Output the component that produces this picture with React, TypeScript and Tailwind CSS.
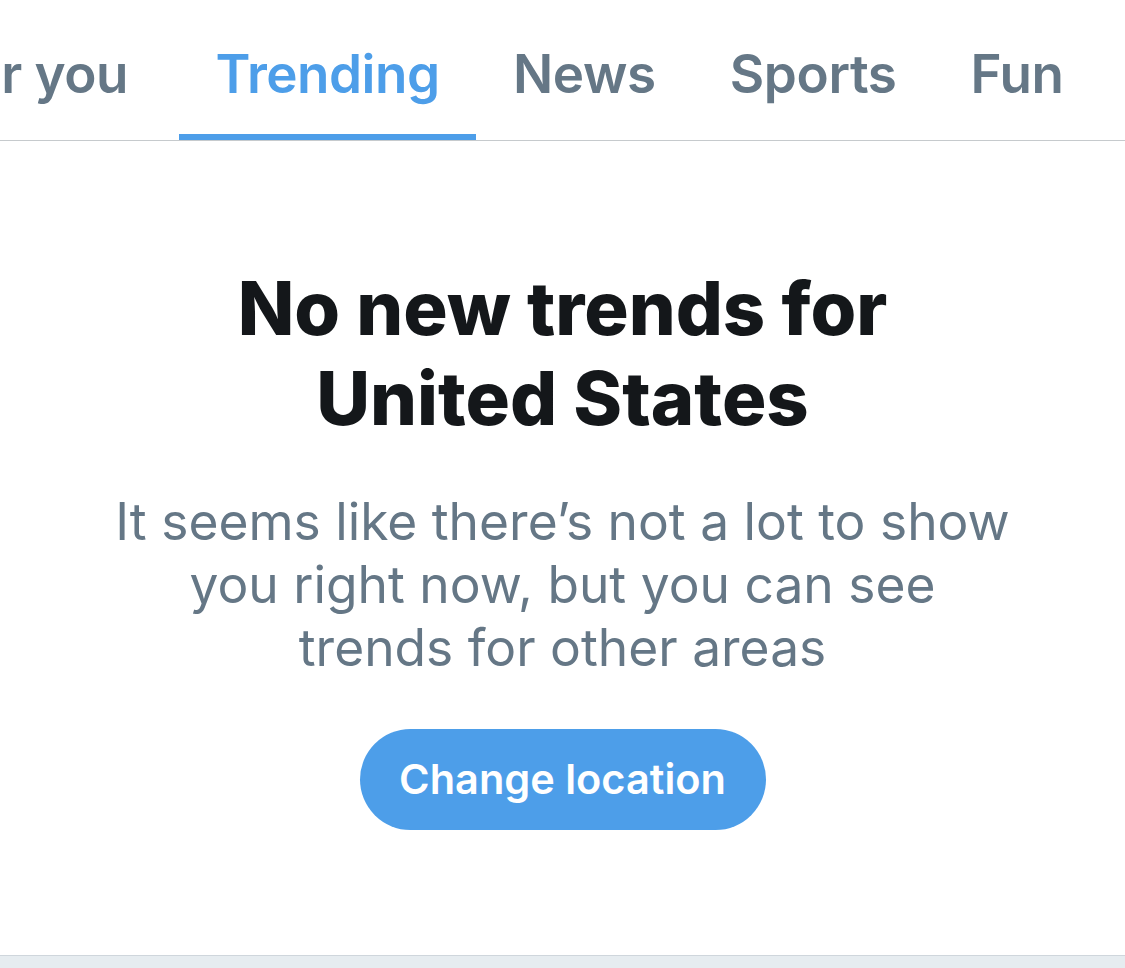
import React from "react";

const tabs = ["News", "Sports", "Fun"];

const App: React.FC = () => {
  return (
    <div className="w-[1125px] h-[968px] overflow-hidden bg-white flex flex-col font-['Inter',sans-serif]">
      {/* tab bar */}
      <div className="flex h-[141px] shrink-0 border-b border-[#c6cacd]">
        <div className="w-[179px] shrink-0 flex justify-end pr-[51px] pt-[47px]">
          <span className="whitespace-nowrap text-[53px] leading-[55px] font-semibold tracking-[-0.5px] text-[#657786]">
            For you
          </span>
        </div>
        <div className="w-[297px] shrink-0 flex flex-col items-center justify-between">
          <span className="pt-[47px] text-[53px] leading-[55px] font-semibold tracking-[-0.5px] text-[#4d9ee9]">
            Trending
          </span>
          <div className="w-full h-[6px] bg-[#4d9ee9]" />
        </div>
        {tabs.map((t) => (
          <div key={t} className="px-[37px] pt-[47px] shrink-0">
            <span className="whitespace-nowrap text-[53px] leading-[55px] font-semibold tracking-[-0.4px] text-[#657786]">
              {t}
            </span>
          </div>
        ))}
      </div>

      {/* empty state */}
      <div className="flex-1 flex flex-col items-center text-center">
        <h1 className="mt-[122px] text-[74px] leading-[90px] font-extrabold text-[#14171a]">
          No new trends for
          <br />
          United States
        </h1>
        <p className="mt-[47px] text-[51.5px] leading-[63px] text-[#657786]">
          It seems like there’s not a lot to show
          <br />
          you right now, but you can see
          <br />
          trends for other areas
        </p>
        <button className="mt-[50px] w-[406px] h-[101px] rounded-full bg-[#4d9ee9] text-white text-[41.5px] font-semibold">
          Change location
        </button>
      </div>

      <div className="h-[13px] shrink-0 border-t border-[#cfd6dc] bg-[#e6ecf0]" />
    </div>
  );
};

export default App;
